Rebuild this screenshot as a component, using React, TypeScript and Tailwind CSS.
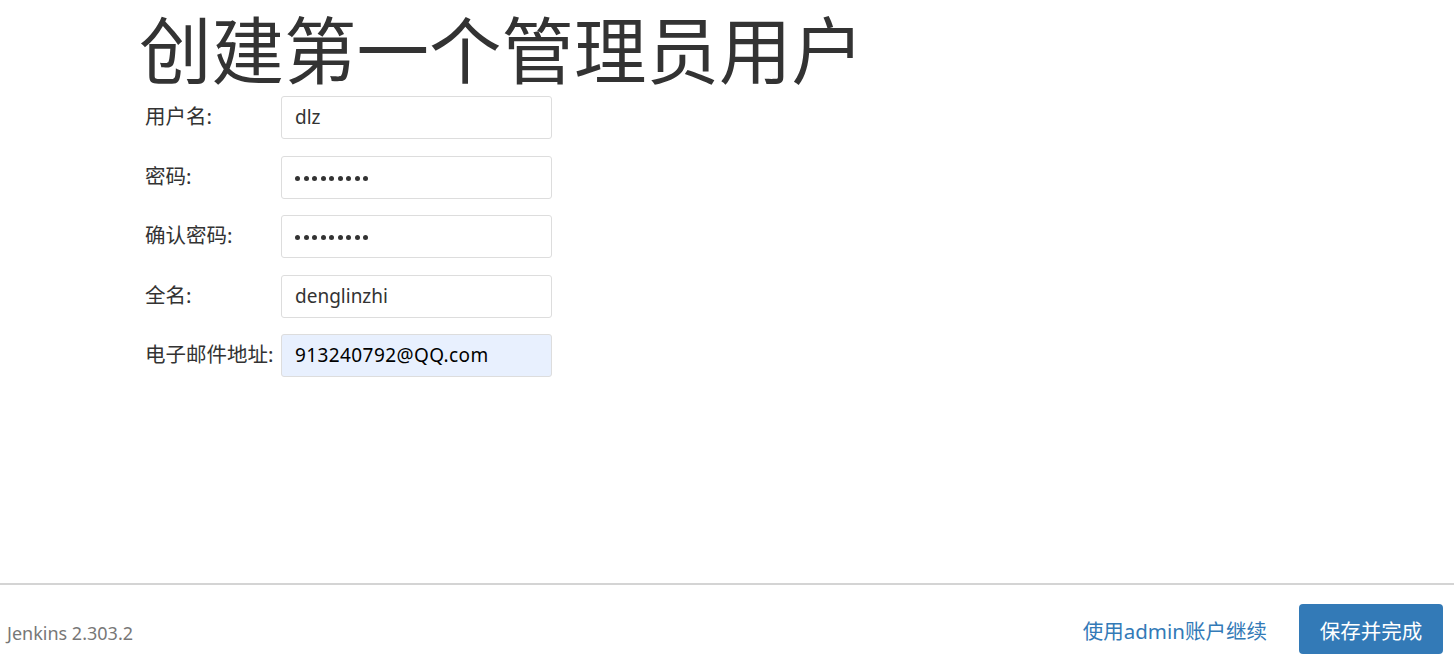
const font = { fontFamily: '"Noto Sans", "Noto Sans CJK SC", sans-serif' };

const fields = [
  { label: "用户名:", value: "dlz", type: "text" },
  { label: "密码:", value: "•••••••••", type: "password" },
  { label: "确认密码:", value: "•••••••••", type: "password" },
  { label: "全名:", value: "denglinzhi", type: "text" },
  { label: "电子邮件地址:", value: "913240792@QQ.com", type: "email" },
];

export default function App() {
  return (
    <div className="flex h-[672px] w-[1454px] flex-col bg-white text-[#333]" style={font}>
      <div className="flex-1 pl-[139px]">
        <h1 className="-mb-[3px] text-[72.5px] leading-[99px] font-normal text-[#333]">创建第一个管理员用户</h1>
        <div className="flex flex-col gap-[16.5px] pl-[6px]">
          {fields.map((f) => (
            <div key={f.label} className="flex items-start">
              <label className="w-[136px] pt-[6px] text-[20.5px] leading-[28px] whitespace-nowrap">{f.label}</label>
              <div
                className={`flex h-[43px] w-[271px] items-center rounded-[3px] border border-[#ddd] px-[13px] text-[19px] ${
                  f.type === "email" ? "bg-[#e8f0fe] text-black" : "bg-white text-[#333]"
                }`}
              >
                {f.type === "password" ? (
                  <span className="flex gap-[3.5px] pt-[2px]">
                    {Array.from({ length: 9 }).map((_, i) => (
                      <span key={i} className="h-[5px] w-[5px] rounded-full bg-[#333]" />
                    ))}
                  </span>
                ) : (
                  <span className={f.type === "email" ? "tracking-[0.4px]" : ""}>{f.value}</span>
                )}
              </div>
            </div>
          ))}
        </div>
      </div>
      <div className="flex h-[89px] items-center justify-between border-t-2 border-[#d4d4d4] pl-[7px] pr-[11px]">
        <span className="pt-[9px] text-[18px] text-[#777]">Jenkins 2.303.2</span>
        <div className="flex items-center gap-[32px]">
          <span className="pt-[6px] text-[20.5px] text-[#337ab7]">使用admin账户继续</span>
          <button className="h-[50px] w-[144px] rounded-[4px] bg-[#337ab7] pt-[5px] text-[20.5px] text-white">保存并完成</button>
        </div>
      </div>
    </div>
  );
}
